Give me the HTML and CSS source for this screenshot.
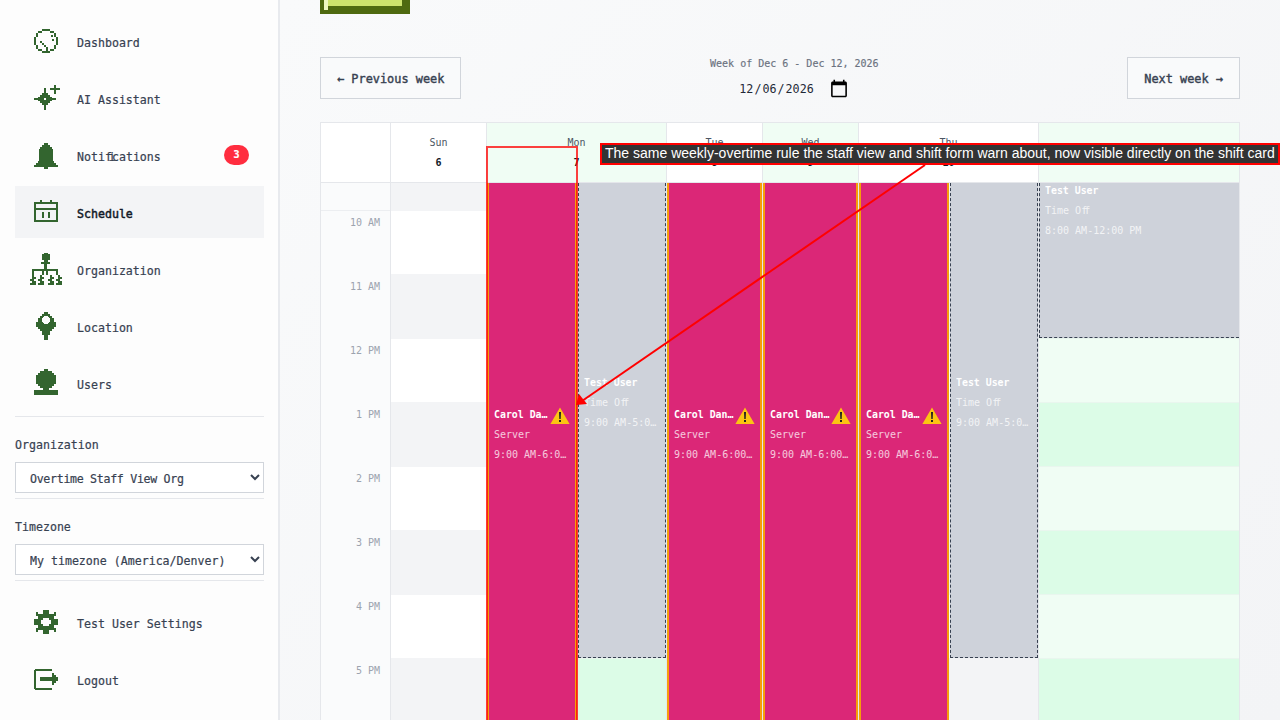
FILE: index.html
```html
<!DOCTYPE html>
<html lang="en">
<head>
    <meta charset="UTF-8">
    <meta name="viewport" content="width=device-width, initial-scale=1.0">
    <title>Schedule</title>
    <link rel="stylesheet" href="styles.css">
</head>
<body>
    <aside class="sidebar">
        <nav class="nav-list">
            <a class="nav-item">
                <svg class="nav-icon" viewBox="0 0 32 28"><path d="M12 1h8v2h-8zM8 3h4v2H8zM20 3h4v2h-4zM6 5h2v4H6zM24 5h2v4h-2zM4 9h2v8H4zM26 9h2v8h-2zM6 17h2v4H6zM24 17h2v4h-2zM8 21h4v2H8zM20 21h4v2h-4zM12 23h8v2h-8zM10 13h2v2h-2zM12 15h2v2h-2zM14 17h2v2h-2zM16 19h2v4h-2zM21 7h2v2h-2zM24 11h-2v2h2z"/></svg>
                <span class="nav-text">Dashboard</span>
            </a>
            <a class="nav-item">
                <svg class="nav-icon" viewBox="0 0 32 28"><path d="M14 3h2v22h-2zM4 13h22v2H4zM12 8h6v12h-6zM10 10h10v8H10zM8 12h14v4H8zM24 0h2v9h-2zM20 3h10v2H20z"/><rect class="hole" x="14" y="13" width="2" height="2"/></svg>
                <span class="nav-text">AI Assistant</span>
            </a>
            <a class="nav-item">
                <svg class="nav-icon" viewBox="0 0 32 28"><path d="M14 1h4v2h2v2h2v2h1v12h1v2h2v2h2v2H18v2h-4v-2H4v-2h2v-2h2v-2h1V7h1V5h2V3h2z"/></svg>
                <span class="nav-text">Noti<span class="lig">fi</span>cations</span>
                <span class="badge">3</span>
            </a>
            <a class="nav-item active">
                <svg class="nav-icon" viewBox="0 0 32 28"><path d="M4 3h24v20H4zM6 5v4h20V5zM6 11v10h20V11z" fill-rule="evenodd"/><path d="M10 1h2v4h-2zM20 1h2v4h-2zM12 13h2v6h-2zM18 13h2v6h-2z"/></svg>
                <span class="nav-text">Schedule</span>
            </a>
            <a class="nav-item">
                <svg class="nav-icon" viewBox="0 0 32 28"><path d="M14-3h4v1h2v6h-2v2h2v2h-3v5h11v6h-2v-4h-8v4h-2v-4h-2v4h-2v-4H4v4H2v-6h12V8h-3V6h3V4h-2v-6h2z"/><path d="M2 19h2v2h2v2H4v2h2v4H0v-2h2v-2H0v-2h2zM10 19h2v2h2v2h-2v2h2v4H8v-2h2v-2H8v-2h2zM20 19h2v2h2v2h-2v2h2v4h-6v-2h2v-2h-2v-2h2zM28 19h2v2h2v2h-2v2h2v4h-6v-2h2v-2h-2v-2h2z"/></svg>
                <span class="nav-text">Organization</span>
            </a>
            <a class="nav-item">
                <svg class="nav-icon" viewBox="0 0 32 28"><path d="M14-1h4v2h2v2h2v2h2v4h2v5h-2v2h-2v2h-2v4h-2v5h-4v-5h-2v-4h-2v-2H8v-2H6V9h2V5h2V3h2V1h2z"/><path class="hole" d="M14 3h4v1h1v1h1v4h-1v1h-1v1h-4v-1h-1V9h-1V5h1V4h1z"/></svg>
                <span class="nav-text">Location</span>
            </a>
            <a class="nav-item">
                <svg class="nav-icon" viewBox="0 0 32 28"><path d="M14-1h4v2h4v2h2v2h2v9h-2v2h-2v2h-3v2h9v5H4v-5h9v-2h-3v-2H8v-2H6V5h2V3h2V1h4z"/></svg>
                <span class="nav-text">Users</span>
            </a>
        </nav>

        <div class="filter">
            <label class="filter-label" for="orgSelect">Organization</label>
            <select id="orgSelect" class="filter-select tight">
                <option>Overtime Staff View Org</option>
            </select>
        </div>
        <div class="filter">
            <label class="filter-label" for="tzSelect">Timezone</label>
            <select id="tzSelect" class="filter-select">
                <option>My timezone (America/Denver)</option>
            </select>
        </div>

        <nav class="nav-list nav-bottom">
            <a class="nav-item">
                <svg class="nav-icon" viewBox="0 0 32 28"><path d="M13 1h6v4h5v-2h2v4h-2v3h4v6h-4v3h2v4h-2v-2h-5v4h-6v-4H8v2H6v-4h2v-3H4v-6h4V7H6V3h2v2h5z"/><path class="hole" d="M13 9h6v2h2v4h-2v2h-6v-2h-2v-4h2z"/></svg>
                <span class="nav-text">Test User Settings</span>
            </a>
            <a class="nav-item">
                <svg class="nav-icon" viewBox="0 0 32 28"><path d="M5 3h17v2H6v17h16v2H5V23H4V4h1zM10 11h12V7h2v2h2v2h2v4h-2v2h-2v2h-2v-4H10z"/></svg>
                <span class="nav-text">Logout</span>
            </a>
        </nav>
    </aside>

    <main class="main">
        <div class="top-button">
            <div class="top-button-shine"></div>
            <div class="top-button-face"></div>
        </div>

        <div class="toolbar">
            <button class="week-button">← Previous week</button>
            <div class="week-picker">
                <div class="week-label">Week of Dec 6 - Dec 12, 2026</div>
                <input type="date" class="week-date" value="2026-12-06">
            </div>
            <button class="week-button">Next week →</button>
        </div>

        <div class="calendar">
            <div class="cal-head">
                <div class="head-cell"></div>
                <div class="head-cell"><span class="head-day">Sun</span><span class="head-num">6</span></div>
                <div class="head-cell mint"><span class="head-day">Mon</span><span class="head-num">7</span></div>
                <div class="head-cell"><span class="head-day">Tue</span><span class="head-num">8</span></div>
                <div class="head-cell mint"><span class="head-day">Wed</span><span class="head-num">9</span></div>
                <div class="head-cell"><span class="head-day">Thu</span><span class="head-num">10</span></div>
                <div class="head-cell mint"></div>
            </div>

            <div class="cal-body">
                <div class="gutter">
                    <div class="time-cell first"></div>
                    <div class="time-cell">10 AM</div>
                    <div class="time-cell">11 AM</div>
                    <div class="time-cell">12 PM</div>
                    <div class="time-cell">1 PM</div>
                    <div class="time-cell">2 PM</div>
                    <div class="time-cell">3 PM</div>
                    <div class="time-cell">4 PM</div>
                    <div class="time-cell">5 PM</div>
                </div>

                <div class="day">
                    <div class="slot first alt"></div><div class="slot"></div><div class="slot alt"></div><div class="slot"></div><div class="slot alt"></div><div class="slot"></div><div class="slot alt"></div><div class="slot"></div><div class="slot alt"></div>
                </div>

                <div class="day mint">
                    <div class="slot first alt"></div><div class="slot"></div><div class="slot alt"></div><div class="slot"></div><div class="slot alt"></div><div class="slot"></div><div class="slot alt"></div><div class="slot"></div><div class="slot alt"></div>
                    <div class="events">
                        <div class="event shift half">
                            <div class="event-title"><span class="event-name">Carol Dandridge</span><svg class="warn" viewBox="0 0 20 17"><path d="M10 .5 19.600 17H.4z" fill="#fbc513"/><path d="M9 5h2l-.3 7H9.300zM9 13h2v2H9z" fill="#222"/></svg></div>
                            <div class="event-line">Server</div>
                            <div class="event-line">9:00 AM-6:00 PM</div>
                        </div>
                        <div class="event off mid">
                            <div class="event-title"><span class="event-name">Test User</span></div>
                            <div class="event-line">Time O<span class="lig">ff</span></div>
                            <div class="event-line">9:00 AM-5:00 PM</div>
                        </div>
                    </div>
                </div>

                <div class="day">
                    <div class="slot first alt"></div><div class="slot"></div><div class="slot alt"></div><div class="slot"></div><div class="slot alt"></div><div class="slot"></div><div class="slot alt"></div><div class="slot"></div><div class="slot alt"></div>
                    <div class="events">
                        <div class="event shift">
                            <div class="event-title"><span class="event-name">Carol Dandridge</span><svg class="warn" viewBox="0 0 20 17"><path d="M10 .5 19.600 17H.4z" fill="#fbc513"/><path d="M9 5h2l-.3 7H9.300zM9 13h2v2H9z" fill="#222"/></svg></div>
                            <div class="event-line">Server</div>
                            <div class="event-line">9:00 AM-6:00 PM</div>
                        </div>
                    </div>
                </div>

                <div class="day mint">
                    <div class="slot first alt"></div><div class="slot"></div><div class="slot alt"></div><div class="slot"></div><div class="slot alt"></div><div class="slot"></div><div class="slot alt"></div><div class="slot"></div><div class="slot alt"></div>
                    <div class="events">
                        <div class="event shift">
                            <div class="event-title"><span class="event-name">Carol Dandridge</span><svg class="warn" viewBox="0 0 20 17"><path d="M10 .5 19.600 17H.4z" fill="#fbc513"/><path d="M9 5h2l-.3 7H9.300zM9 13h2v2H9z" fill="#222"/></svg></div>
                            <div class="event-line">Server</div>
                            <div class="event-line">9:00 AM-6:00 PM</div>
                        </div>
                    </div>
                </div>

                <div class="day">
                    <div class="slot first alt"></div><div class="slot"></div><div class="slot alt"></div><div class="slot"></div><div class="slot alt"></div><div class="slot"></div><div class="slot alt"></div><div class="slot"></div><div class="slot alt"></div>
                    <div class="events">
                        <div class="event shift half">
                            <div class="event-title"><span class="event-name">Carol Dandridge</span><svg class="warn" viewBox="0 0 20 17"><path d="M10 .5 19.600 17H.4z" fill="#fbc513"/><path d="M9 5h2l-.3 7H9.300zM9 13h2v2H9z" fill="#222"/></svg></div>
                            <div class="event-line">Server</div>
                            <div class="event-line">9:00 AM-6:00 PM</div>
                        </div>
                        <div class="event off mid">
                            <div class="event-title"><span class="event-name">Test User</span></div>
                            <div class="event-line">Time O<span class="lig">ff</span></div>
                            <div class="event-line">9:00 AM-5:00 PM</div>
                        </div>
                    </div>
                </div>

                <div class="day mint">
                    <div class="slot first alt"></div><div class="slot"></div><div class="slot alt"></div><div class="slot"></div><div class="slot alt"></div><div class="slot"></div><div class="slot alt"></div><div class="slot"></div><div class="slot alt"></div>
                    <div class="events">
                        <div class="event off morning">
                            <div class="event-title"><span class="event-name">Test User</span></div>
                            <div class="event-line">Time O<span class="lig">ff</span></div>
                            <div class="event-line">8:00 AM-12:00 PM</div>
                        </div>
                    </div>
                </div>
            </div>
        </div>
    </main>

    <!-- annotation drawn over the page -->
    <div class="note-box"></div>
    <svg class="note-arrow" viewBox="0 0 1280 720">
        <path d="M925 165 582 401" stroke="#ff0000" stroke-width="2" fill="none"/>
        <path d="M576 405 579 394 587 404z" fill="#ff0000"/>
    </svg>
    <div class="note-label">The same weekly-overtime rule the staff view and shift form warn about, now visible directly on the shift card</div>
</body>
</html>
```

FILE: styles.css
```css
* {
    box-sizing: border-box;
}
html, body {
    height: 720px;
    margin: 0;
    overflow: hidden;
}
body {
    display: flex;
    font-family: "DejaVu Sans Mono", monospace;
    font-size: 11.6px;
    color: #374151;
    background-color: #f9fafb;
}

/* sidebar */
.sidebar {
    flex: 0 0 280px;
    height: 720px;
    padding: 15px 14px 0 15px;
    background: #fdfdfd;
    border-right: 2px solid #e8eaee;
}
.nav-list {
    display: flex;
    flex-direction: column;
    gap: 5px;
}
.nav-item {
    display: flex;
    align-items: center;
    gap: 15px;
    height: 52px;
    padding: 0 15px;
    color: #374151;
    -webkit-text-stroke: 0.2px;
}
.nav-item.active {
    background: #f3f4f6;
    color: #111827;
    -webkit-text-stroke: 0.45px;
}
.nav-icon {
    flex: 0 0 32px;
    width: 32px;
    height: 28px;
    margin-top: 2px;
    overflow: visible;
    fill: #33652f;
    shape-rendering: crispEdges;
}
.nav-text {
    padding-top: 3px;
}
.lig {
    letter-spacing: -0.3em;
}
.hole {
    fill: #fdfdfd;
}
.badge {
    margin: 0 0 0 auto;
    width: 25px;
    height: 20px;
    border-radius: 10px;
    background: #ff2d3f;
    color: white;
    font-size: 10px;
    font-weight: bold;
    line-height: 20px;
    text-align: center;
}
.filter {
    padding: 18px 0 5px;
    border-bottom: 1px solid #e5e7eb;
}
.nav-list + .filter {
    margin-top: 7px;
    border-top: 1px solid #e5e7eb;
}
.filter-label {
    display: block;
    height: 20px;
    margin-bottom: 7px;
    line-height: 21px;
    -webkit-text-stroke: 0.2px;
}
.filter-select {
    display: block;
    width: 100%;
    height: 31px;
    padding: 2px 10px 0;
    border: 1px solid #d1d5db;
    border-radius: 0;
    background-color: white;
    color: #374151;
    font-family: inherit;
    font-size: 11.6px;
    -webkit-text-stroke: 0.2px;
}
.filter-select.tight {
    letter-spacing: -0.3px;
}
.nav-bottom {
    margin-top: 15px;
}

/* main column */
.main {
    flex: 1;
    min-width: 0;
    padding: 0 40px;
    background: linear-gradient(135deg, #f9fafb, #f3f4f6);
}
.top-button {
    display: flex;
    align-items: flex-start;
    width: 90px;
    height: 14px;
    padding-left: 4px;
    background: #4f6a10;
}
.top-button-shine {
    width: 4px;
    height: 10px;
    background: #eef8c0;
}
.top-button-face {
    width: 74px;
    height: 6px;
    background: #cde36d;
}
.toolbar {
    display: flex;
    justify-content: space-between;
    align-items: center;
    height: 42px;
    margin: 43px 0 23px;
}
.week-button {
    height: 42px;
    padding: 2px 16px 0;
    border: 1px solid #d1d5db;
    background: #f9fafb;
    color: #374151;
    font-family: inherit;
    font-size: 11.9px;
    -webkit-text-stroke: 0.4px;
}
.week-picker {
    display: flex;
    flex-direction: column;
    align-items: center;
    gap: 7px;
}
.week-label {
    color: #6b7280;
    font-size: 10px;
    line-height: 14px;
    padding-top: 1px;
    height: 14px;
    -webkit-text-stroke: 0.15px;
}
.week-date {
    width: 112px;
    height: 24px;
    padding: 0;
    border: none;
    background: transparent;
    color: #1f2937;
    font-family: inherit;
    font-size: 11.7px;
}
.week-date::-webkit-calendar-picker-indicator {
    width: 20px;
    height: 20px;
    margin: 0 1px 0 0;
    padding: 0;
}

/* calendar */
.calendar {
    border: 1px solid #e5e7eb;
    border-bottom: none;
}
.cal-head, .cal-body {
    display: grid;
    grid-template-columns: 70px 96px 180px 96px 96px 180px 200px;
}
.head-cell {
    display: flex;
    flex-direction: column;
    align-items: center;
    justify-content: center;
    height: 60px;
    background: white;
    border-right: 1px solid #e5e7eb;
    border-bottom: 1px solid #e5e7eb;
    line-height: 20px;
}
.head-cell:last-child, .day:last-child {
    border-right: none;
}
.head-cell.mint {
    background: #f0fdf4;
}
.head-day {
    color: #4b5563;
    font-size: 10px;
}
.head-num {
    color: #111827;
    font-size: 10px;
    font-weight: bold;
}
.gutter {
    background: #fafbfc;
    border-right: 1px solid #e5e7eb;
}
.time-cell {
    height: 64px;
    padding: 5px 10px 0 0;
    color: #9ca3af;
    font-size: 10px;
    line-height: 14px;
    text-align: right;
}
.time-cell.first {
    height: 28px;
    border-bottom: 1px solid #eceef1;
}
.day {
    position: relative;
    border-right: 1px solid #e5e7eb;
}
.slot {
    height: 64px;
    background: white;
    border-bottom: 1px solid #f3f4f6;
}
.slot.first {
    height: 28px;
}
.slot.alt {
    background: #f3f4f6;
}
.day.mint .slot {
    background: #f0fdf4;
    border-bottom-color: #e9f6ee;
}
.day.mint .slot.alt {
    background: #dcfce7;
}

/* events sit on top of the hour slots */
.events {
    position: absolute;
    inset: 0;
    display: flex;
    gap: 1px;
    align-items: flex-start;
}
.event {
    flex: 1;
    min-width: 0;
    padding: 225px 5px 0;
    color: white;
    font-size: 10px;
    line-height: 14px;
}
.event.shift {
    height: 537px;
    background: #db2777;
    border-left: 2px solid #f59e0b;
    border-right: 2px solid #f59e0b;
}
.event.half {
    flex: 0 0 90px;
}
.event.off {
    background: #ced2da;
    border: 1px dashed #374151;
    border-top: none;
    color: white;
}
.event.mid {
    height: 475px;
    padding-top: 193px;
}
.event.morning {
    height: 155px;
    padding-top: 1px;
    border-right: none;
}
.event-title {
    display: flex;
    align-items: center;
    gap: 1px;
    height: 20px;
    margin-top: -3px;
    font-size: 9.9px;
    font-weight: bold;
}
.event-name {
    min-width: 0;
    overflow: hidden;
    white-space: nowrap;
    text-overflow: ellipsis;
}
.event-line {
    height: 20px;
    line-height: 20px;
    opacity: 0.75;
    overflow: hidden;
    white-space: nowrap;
    text-overflow: ellipsis;
}
.warn {
    flex: 0 0 20px;
    width: 20px;
    height: 17px;
}

/* annotation overlay */
.note-box {
    position: absolute;
    left: 486px;
    top: 146px;
    width: 92px;
    height: 600px;
    border: 2px solid rgba(255, 0, 0, 0.75);
}
.note-arrow {
    position: absolute;
    left: 0;
    top: 0;
    width: 1280px;
    height: 720px;
    pointer-events: none;
}
.note-label {
    position: absolute;
    left: 600px;
    top: 143px;
    width: 680px;
    height: 22px;
    padding: 0 3px;
    background: #333333;
    border: 2px solid #ff0000;
    color: white;
    font-family: "Liberation Sans", Arial, sans-serif;
    font-size: 14px;
    line-height: 17px;
    white-space: nowrap;
}
```
